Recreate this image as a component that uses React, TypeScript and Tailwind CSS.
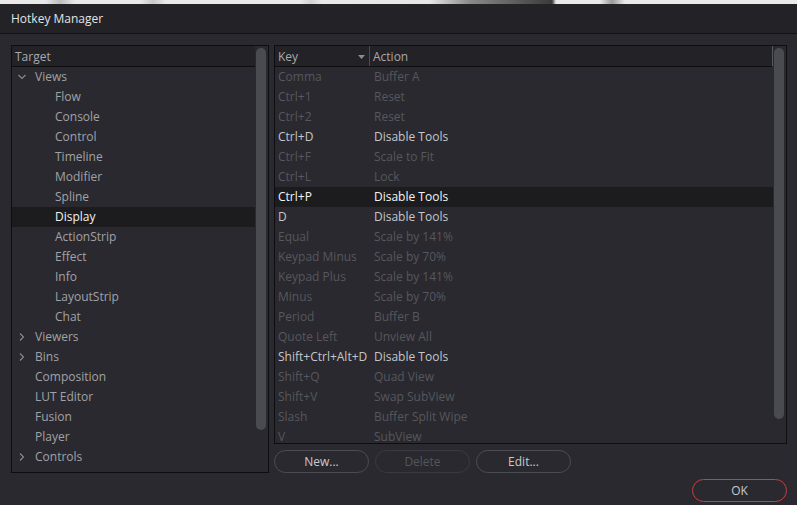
import React from "react";

type TreeItem = { label: string; level: 0 | 1; chevron?: "down" | "right"; selected?: boolean };

const tree: TreeItem[] = [
  { label: "Views", level: 0, chevron: "down" },
  { label: "Flow", level: 1 },
  { label: "Console", level: 1 },
  { label: "Control", level: 1 },
  { label: "Timeline", level: 1 },
  { label: "Modifier", level: 1 },
  { label: "Spline", level: 1 },
  { label: "Display", level: 1, selected: true },
  { label: "ActionStrip", level: 1 },
  { label: "Effect", level: 1 },
  { label: "Info", level: 1 },
  { label: "LayoutStrip", level: 1 },
  { label: "Chat", level: 1 },
  { label: "Viewers", level: 0, chevron: "right" },
  { label: "Bins", level: 0, chevron: "right" },
  { label: "Composition", level: 0 },
  { label: "LUT Editor", level: 0 },
  { label: "Fusion", level: 0 },
  { label: "Player", level: 0 },
  { label: "Controls", level: 0, chevron: "right" },
];

type Hotkey = { key: string; action: string; state?: "on" | "selected" };

const hotkeys: Hotkey[] = [
  { key: "Comma", action: "Buffer A" },
  { key: "Ctrl+1", action: "Reset" },
  { key: "Ctrl+2", action: "Reset" },
  { key: "Ctrl+D", action: "Disable Tools", state: "on" },
  { key: "Ctrl+F", action: "Scale to Fit" },
  { key: "Ctrl+L", action: "Lock" },
  { key: "Ctrl+P", action: "Disable Tools", state: "selected" },
  { key: "D", action: "Disable Tools", state: "on" },
  { key: "Equal", action: "Scale by 141%" },
  { key: "Keypad Minus", action: "Scale by 70%" },
  { key: "Keypad Plus", action: "Scale by 141%" },
  { key: "Minus", action: "Scale by 70%" },
  { key: "Period", action: "Buffer B" },
  { key: "Quote Left", action: "Unview All" },
  { key: "Shift+Ctrl+Alt+D", action: "Disable Tools", state: "on" },
  { key: "Shift+Q", action: "Quad View" },
  { key: "Shift+V", action: "Swap SubView" },
  { key: "Slash", action: "Buffer Split Wipe" },
  { key: "V", action: "SubView" },
];

function Chevron({ dir }: { dir: "down" | "right" }) {
  return (
    <svg width="10" height="10" viewBox="0 0 10 10" className="shrink-0">
      {dir === "down" ? (
        <polyline points="1.5,3 5,6.5 8.5,3" fill="none" stroke="#8c8c90" strokeWidth="1.1" />
      ) : (
        <polyline points="3,1.5 6.5,5 3,8.5" fill="none" stroke="#8c8c90" strokeWidth="1.1" />
      )}
    </svg>
  );
}

function Scrollbar({ thumbH }: { thumbH: string }) {
  return (
    <div className="w-[13px] shrink-0 pl-[1px] pt-[2px]">
      <div className={`w-[10px] ${thumbH} rounded-full bg-[#4a4a51]`} />
    </div>
  );
}

function PillButton({ children, disabled }: { children: React.ReactNode; disabled?: boolean }) {
  return (
    <button
      className={`w-[95px] h-[23px] rounded-full border text-[12px] leading-none ${
        disabled ? "border-[#3a3a40] text-[#55555b]" : "border-[#4c4c53] text-[#c9c9cc]"
      }`}
    >
      {children}
    </button>
  );
}

export default function App() {
  return (
    <div
      className="w-[797px] h-[505px] overflow-hidden bg-[#29292f] flex flex-col text-[12px]"
      style={{ fontFamily: '"Open Sans", "Liberation Sans", sans-serif' }}
    >
      <div className="h-[4px] shrink-0 bg-[linear-gradient(90deg,#e9e9e9_0px,#e9e9e9_45px,#bdbdbd_60px,#e9e9e9_75px,#e9e9e9_140px,#c8c8c8_153px,#e9e9e9_166px,#e9e9e9_300px,#d2d2d2_311px,#e9e9e9_322px,#e6e6e6_430px,#8a8a8a_470px,#3a3a3a_552px,#e9e9e9_556px,#e9e9e9_600px,#9a9a9a_612px,#e9e9e9_625px,#e9e9e9_100%)]" />

      <div className="h-[30px] shrink-0 flex items-center px-[11px] bg-[#222227] border-b border-[#121215] text-[#e2e2e4]">
        Hotkey Manager
      </div>

      <div className="flex gap-[5px] pl-[11px] pt-[11px]">
        {/* Target tree */}
        <div className="w-[258px] h-[428px] border border-[#0e0e10] flex">
          <div className="flex-1 flex flex-col overflow-hidden">
            <div className="h-[21px] shrink-0 flex items-center pl-[3px] pt-[2px] bg-[#222227] border-b border-[#0e0e10] text-[#a9a9ad]">
              Target
            </div>
            {tree.map((t) => (
              <div
                key={t.label}
                className={`h-[20px] shrink-0 flex items-center ${t.selected ? "bg-[#1c1c1f] text-[#f2f2f2]" : "text-[#a2a2a6]"} ${
                  t.level === 0 ? "pl-[4px]" : "pl-[43px]"
                }`}
              >
                {t.level === 0 && (
                  <div className="w-[19px] flex items-center pl-[1px]">
                    {t.chevron && <Chevron dir={t.chevron} />}
                  </div>
                )}
                {t.label}
              </div>
            ))}
          </div>
          <Scrollbar thumbH="h-[382px]" />
        </div>

        {/* Hotkey table */}
        <div className="w-[513px] flex flex-col">
          <div className="h-[399px] border border-[#0e0e10] flex">
            <div className="flex-1 flex flex-col overflow-hidden">
              <div className="h-[21px] shrink-0 flex bg-[#222227] border-b border-[#0e0e10] border-r border-r-[#55555b] text-[#a9a9ad]">
                <div className="w-[95px] flex items-center justify-between pl-[3px] pr-[4px] pt-[2px] border-r border-[#4a4a50]">
                  <span>Key</span>
                  <svg width="7" height="4" viewBox="0 0 7 4">
                    <polygon points="0,0 7,0 3.5,4" fill="#8c8c90" />
                  </svg>
                </div>
                <div className="flex items-center pl-[3px] pt-[2px]">Action</div>
              </div>
              {hotkeys.map((h) => {
                const color =
                  h.state === "selected" ? "text-[#f4f4f4]" : h.state === "on" ? "text-[#c6c6c9]" : "text-[#57575d]";
                return (
                  <div
                    key={h.key}
                    className={`h-[20px] shrink-0 flex items-center ${color} ${h.state === "selected" ? "bg-[#1c1c1f]" : ""}`}
                  >
                    <div className="w-[96px] pl-[3px] whitespace-nowrap">{h.key}</div>
                    <div className="pl-[3px]">{h.action}</div>
                  </div>
                );
              })}
            </div>
            <Scrollbar thumbH="h-[371px]" />
          </div>

          <div className="flex gap-[6px] mt-[6px]">
            <PillButton>New...</PillButton>
            <PillButton disabled>Delete</PillButton>
            <PillButton>Edit...</PillButton>
          </div>

          <div className="flex justify-end mt-[6px]">
            <button className="w-[95px] h-[23px] rounded-full border border-[#c0433f] text-[#c9c9cc] leading-none">
              OK
            </button>
          </div>
        </div>
      </div>
    </div>
  );
}
